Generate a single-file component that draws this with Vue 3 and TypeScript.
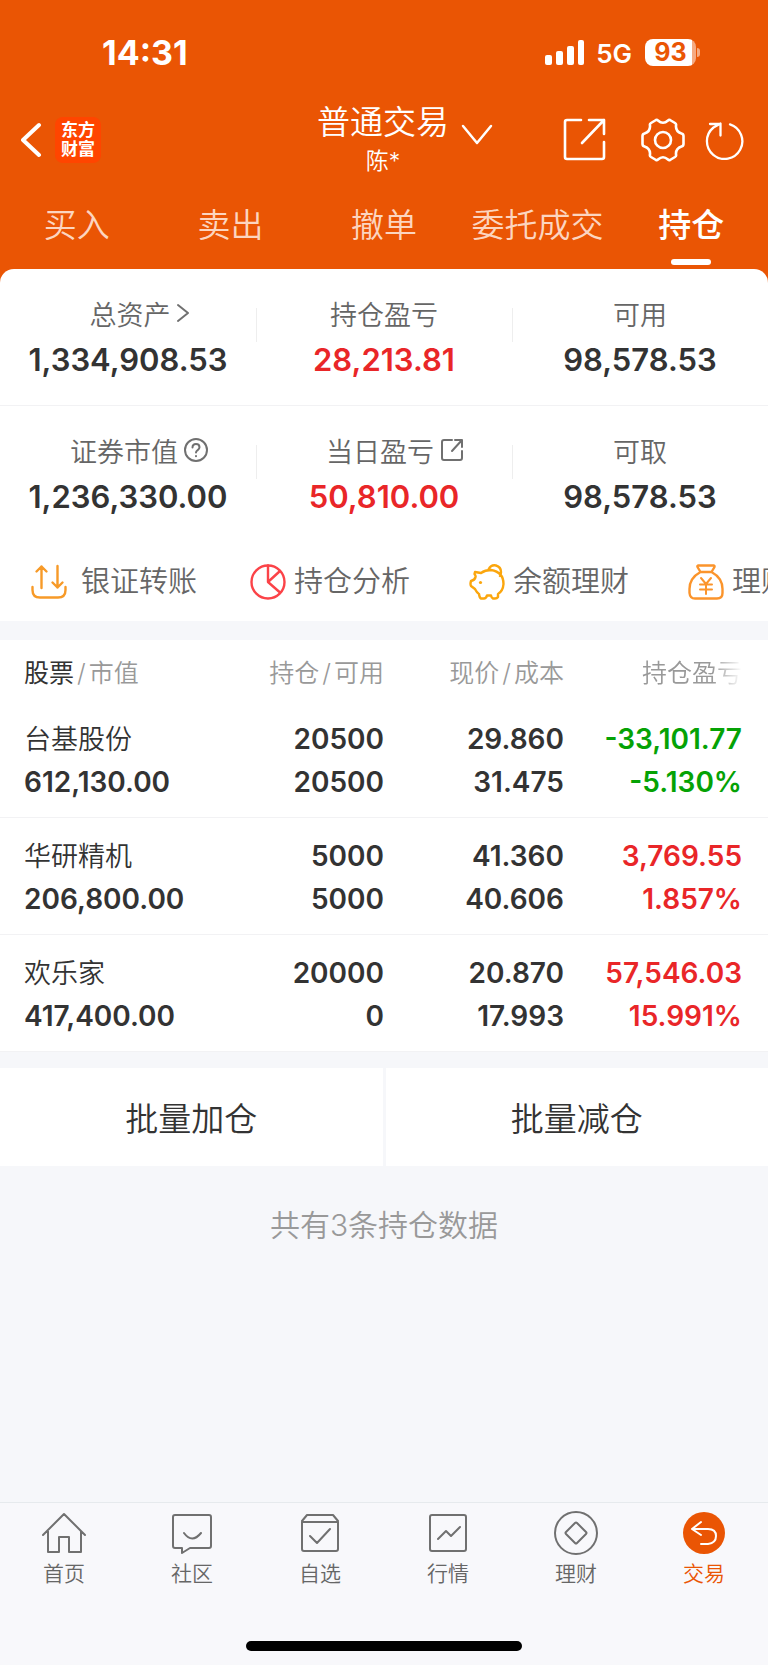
<script setup lang="ts">
import { ref } from 'vue'

type Tone = 'up' | 'down'
interface Holding {
  name: string
  value: string
  held: string
  available: string
  price: string
  cost: string
  profit: string
  rate: string
  tone: Tone
}
interface Metric {
  label: string
  value: string
  icon?: 'chevron' | 'help' | 'open'
  red?: boolean
}

const tabs = ['买入', '卖出', '撤单', '委托成交', '持仓']
const activeTab = ref('持仓')

const metrics: Metric[][] = [
  [
    { label: '总资产', value: '1,334,908.53', icon: 'chevron' },
    { label: '持仓盈亏', value: '28,213.81', red: true },
    { label: '可用', value: '98,578.53' },
  ],
  [
    { label: '证券市值', value: '1,236,330.00', icon: 'help' },
    { label: '当日盈亏', value: '50,810.00', icon: 'open', red: true },
    { label: '可取', value: '98,578.53' },
  ],
]

const shortcuts = [
  { id: 'transfer', label: '银证转账' },
  { id: 'analysis', label: '持仓分析' },
  { id: 'balance', label: '余额理财' },
  { id: 'wealth', label: '理财' },
]

const holdings: Holding[] = [
  { name: '台基股份', value: '612,130.00', held: '20500', available: '20500', price: '29.860', cost: '31.475', profit: '-33,101.77', rate: '-5.130%', tone: 'down' },
  { name: '华研精机', value: '206,800.00', held: '5000', available: '5000', price: '41.360', cost: '40.606', profit: '3,769.55', rate: '1.857%', tone: 'up' },
  { name: '欢乐家', value: '417,400.00', held: '20000', available: '0', price: '20.870', cost: '17.993', profit: '57,546.03', rate: '15.991%', tone: 'up' },
]

const navItems = [
  { id: 'home', label: '首页' },
  { id: 'community', label: '社区' },
  { id: 'watch', label: '自选' },
  { id: 'market', label: '行情' },
  { id: 'finance', label: '理财' },
  { id: 'trade', label: '交易' },
]
const activeNav = ref('trade')
</script>

<template>
  <div class="app">
    <header class="top">
      <div class="status">
        <span class="time">14:31</span>
        <div class="status-right">
          <svg class="signal" viewBox="0 0 40 25" width="40" height="25" aria-hidden="true">
            <rect x="0" y="15" width="7" height="10" rx="2" />
            <rect x="11" y="11" width="7" height="14" rx="2" />
            <rect x="22" y="6" width="7" height="19" rx="2" />
            <rect x="33" y="0" width="6" height="25" rx="2" />
          </svg>
          <span class="network">5G</span>
          <span class="battery"><span class="level">93</span><i class="cap"></i></span>
        </div>
      </div>

      <div class="bar">
        <div class="bar-left">
          <button class="icon-btn" aria-label="返回">
            <svg viewBox="0 0 22 36" width="22" height="36"><path d="M18 3 2 18 18 33" stroke-width="4" /></svg>
          </button>
          <span class="logo"><span>东方</span><span>财富</span></span>
        </div>
        <div class="title">
          <button class="account">
            <span>普通交易</span>
            <svg viewBox="0 0 32 22" width="32" height="22" aria-hidden="true"><path d="M2 2 16 19 30 2" stroke-width="2.5" /></svg>
          </button>
          <span class="owner">陈*</span>
        </div>
        <div class="bar-right">
          <button class="icon-btn" aria-label="分享">
            <svg viewBox="0 0 44 44" width="44" height="44">
              <path d="M18 2H4Q2 2 2 4V39Q2 41 4 41H39Q41 41 41 39V24M26 2H41V16M41 2 19 25" stroke-width="2.6" />
            </svg>
          </button>
          <button class="icon-btn gear" aria-label="设置">
            <svg viewBox="0 0 44 44" width="44" height="44">
              <path d="M15 2Q16 1.500 17 2.500Q22 7 27 2.500Q28 1.500 29 2L34 5Q35.500 6 35 7.500Q34.500 13.500 40.500 15.500Q42.500 16 42.500 18V26Q42.500 28 40.500 28.500Q34.500 30.500 35 36.500Q35.500 38 34 39L29 42Q28 42.500 27 41.500Q22 37 17 41.500Q16 42.500 15 42L10 39Q8.500 38 9 36.500Q9.500 30.500 3.500 28.500Q1.500 28 1.500 26V18Q1.500 16 3.500 15.500Q9.500 13.500 9 7.500Q8.500 6 10 5Z" stroke-width="2.6" />
              <circle cx="22" cy="22" r="8" stroke-width="2.6" />
            </svg>
          </button>
          <button class="icon-btn refresh" aria-label="刷新">
            <svg viewBox="0 0 40 40" width="40" height="40">
              <path d="M25 4.400A17.700 17.700 0 1 1 8.500 7.500L15.500 3.500M5 4H15.500V15.500" stroke-width="2.3" />
            </svg>
          </button>
        </div>
      </div>

      <nav class="tabs" aria-label="交易功能">
        <button v-for="tab in tabs" :key="tab" :class="{ on: tab === activeTab }" @click="activeTab = tab">{{ tab }}</button>
      </nav>
    </header>

    <section class="summary">
      <div v-for="(row, r) in metrics" :key="r" class="metric-row">
        <div v-for="m in row" :key="m.label" class="metric">
          <div class="metric-label" :class="{ 'with-icon': m.icon }">
            <span>{{ m.label }}</span>
            <svg v-if="m.icon === 'chevron'" viewBox="0 0 12 20" width="12" height="20" aria-hidden="true"><path d="M1 2 11 10 1 18" /></svg>
            <svg v-else-if="m.icon === 'help'" viewBox="0 0 24 24" width="24" height="24" aria-hidden="true">
              <circle cx="12" cy="12" r="11" />
              <path d="M8.500 9.500Q8.500 6 12 6T15.500 9.300Q15.500 11 13.500 12.300Q12 13.500 12 14.500M12 18V18.200" />
            </svg>
            <svg v-else-if="m.icon === 'open'" viewBox="0 0 24 24" width="24" height="24" aria-hidden="true">
              <path d="M12 2H4Q2 2 2 4V20Q2 22 4 22H20Q22 22 22 20V13M15 2H22V9M22 2 12 13" />
            </svg>
          </div>
          <div class="metric-value" :class="{ up: m.red }">{{ m.value }}</div>
        </div>
      </div>
    </section>

    <div class="shortcuts">
      <a v-for="s in shortcuts" :key="s.id" href="#" :class="s.id">
        <svg v-if="s.id === 'transfer'" viewBox="0 0 36 36" width="36" height="36" aria-hidden="true" stroke="#f79a28">
          <path d="M1.500 23V26Q1.500 33.500 9 33.500H27Q34.500 33.500 34.500 26V23M10.500 24V2.500M5.500 7.500 10.500 2.500 15.500 7.500M26.500 2V23.500M21.500 18.500 26.500 23.500 31.500 18.500" />
        </svg>
        <svg v-else-if="s.id === 'analysis'" viewBox="0 0 36 36" width="36" height="36" aria-hidden="true" stroke="#fb4348">
          <circle cx="18" cy="18" r="16.500" /><path d="M18 1.500V18L30 28.500M18 18 30 7" />
        </svg>
        <svg v-else-if="s.id === 'balance'" viewBox="0 0 36 36" width="36" height="36" aria-hidden="true" stroke="#fba60d">
          <path d="M6 8 12 9Q16 6 22 6Q34.500 8 34.500 20Q34 27 29 30V33Q28 34.500 26 34.500H24Q22.500 34 22 31.500H18Q17 34.500 15 34.500H12Q10.500 34 10 30Q8 29 6 25L2 22Q1 20 2 17Q6 16 6.500 13Q7 12 5.500 10ZM19.500 5.500Q22 .5 27 1.500Q32 3 32 8Q32 11 31 12" />
          <circle cx="11.500" cy="18.500" r="1.600" fill="#fba60d" stroke="none" />
        </svg>
        <svg v-else viewBox="0 0 36 36" width="36" height="36" aria-hidden="true" stroke="#fb942b">
          <path d="M10 1.500H26Q27 2 26.500 3L23.500 8H12.500L9.500 3Q9 2 10 1.500ZM12.500 8Q1.500 14 1.500 25V29Q2 34.500 7 34.500H29Q34.500 34.500 34.500 29V25Q34.500 14 23.500 8" />
          <path d="M13 14 18 20 23 14M12 20.500H24M12 25.500H24M18 20V30" stroke-width="2" />
        </svg>
        <span>{{ s.label }}</span>
      </a>
    </div>

    <table class="holdings">
      <thead>
        <tr>
          <th scope="col"><b>股票</b><i>/</i>市值</th>
          <th scope="col">持仓<i>/</i>可用</th>
          <th scope="col">现价<i>/</i>成本</th>
          <th scope="col"><span class="fade">持仓盈亏</span></th>
        </tr>
      </thead>
      <tbody>
        <tr v-for="h in holdings" :key="h.name">
          <td><div class="name">{{ h.name }}</div><div>{{ h.value }}</div></td>
          <td><div>{{ h.held }}</div><div>{{ h.available }}</div></td>
          <td><div>{{ h.price }}</div><div>{{ h.cost }}</div></td>
          <td :class="h.tone"><div>{{ h.profit }}</div><div>{{ h.rate }}</div></td>
        </tr>
      </tbody>
    </table>

    <div class="batch">
      <button>批量加仓</button>
      <button>批量减仓</button>
    </div>
    <p class="count">共有{{ holdings.length }}条持仓数据</p>

    <footer class="bottom">
      <nav class="bottom-nav" aria-label="主导航">
        <a v-for="n in navItems" :key="n.id" href="#" :class="{ on: n.id === activeNav }" @click.prevent="activeNav = n.id">
          <svg viewBox="0 0 44 44" width="44" height="44" aria-hidden="true">
            <path v-if="n.id === 'home'" d="M1 24 22 3 43 24M6 20V41H17V26H27V41H39V20" />
            <path v-else-if="n.id === 'community'" d="M5 4H39Q41 4 41 6V35Q41 37 39 37H20L12 42V37H5Q3 37 3 35V6Q3 4 5 4ZM14 22Q22 33 31 22" />
            <path v-else-if="n.id === 'watch'" d="M4 10 9 4H35L40 10M4 11H40V38Q40 40 38 40H6Q4 40 4 38ZM12 25 19 32 32 18" />
            <path v-else-if="n.id === 'market'" d="M6 4H38Q40 4 40 6V38Q40 40 38 40H6Q4 40 4 38V6Q4 4 6 4ZM12 28 20 20 25 25 34 16" />
            <g v-else-if="n.id === 'finance'"><circle cx="22" cy="22" r="21" /><path d="M21 12Q22 11 23 12L32 21Q33 22 32 23L23 32Q22 33 21 32L12 23Q11 22 12 21Z" /></g>
            <g v-else><circle cx="22" cy="22" r="21" fill="#ea5504" stroke="none" /><path stroke="#fff" d="M19 11 10 18 19 24M10 18H26Q34 18 34 25T26 33H19" /></g>
          </svg>
          <span>{{ n.label }}</span>
        </a>
      </nav>
      <div class="indicator"></div>
    </footer>
  </div>
</template>

<style>
body { margin: 0; background: #f6f7fa; }
</style>

<style scoped>
* { box-sizing: border-box; }
.app {
  display: flex;
  flex-direction: column;
  min-height: 100vh;
  overflow: hidden;
  background: #f6f7fa;
  color: #333;
  font-family: Inter, "Noto Sans CJK SC", sans-serif;
  font-weight: 350;
}
button { padding: 0; border: 0; background: none; color: inherit; font: inherit; cursor: pointer; }
a { color: inherit; text-decoration: none; }
i { font-style: normal; }
svg { display: block; flex: none; fill: none; stroke-linecap: round; stroke-linejoin: round; }

.top { padding-bottom: 32px; background: #ea5504; color: #fff; }
.top svg { stroke: #fff; }
.status { display: flex; justify-content: space-between; align-items: center; height: 102px; padding: 2px 68px 0 102px; }
.time { font-size: 34px; font-weight: 700; }
.status-right { display: flex; align-items: center; }
.top .signal { fill: #fff; stroke: none; }
.network { margin: 2px 13px 0 11px; font-size: 26px; font-weight: 600; }
.battery { display: flex; align-items: center; gap: 1px; }
.level {
  width: 51px; height: 27px; border-radius: 8px;
  background: linear-gradient(to right, #fff 92%, #f5aa82 92%);
  color: #ea5504; font-size: 25px; font-weight: 700; line-height: 27px; text-align: center;
}
.cap { width: 3px; height: 9px; border-radius: 0 4px 4px 0; background: #f5aa82; }

.bar { display: grid; grid-template-columns: 1fr auto 1fr; align-items: center; height: 72px; padding: 0 23px 0 21px; }
.bar-left { display: flex; align-items: center; gap: 12px; }
.logo {
  display: flex; flex-direction: column; justify-content: center; align-items: center;
  width: 46px; height: 46px; border-radius: 8px; background: #ff4500;
  font-size: 17px; font-weight: 700; line-height: 19px;
}
.title { display: flex; flex-direction: column; align-items: center; gap: 2px; }
.account { position: relative; font-size: 33px; line-height: 40px; }
.account svg { position: absolute; left: 100%; top: 22px; margin-left: 12px; }
.owner { font-size: 23px; line-height: 34px; }
.bar-right { display: flex; justify-content: flex-end; align-items: center; }
.gear { margin-left: 34px; }
.refresh { margin-left: 20px; }
.tabs { display: grid; grid-template-columns: repeat(5, 1fr); height: 79px; }
.tabs button { position: relative; padding-top: 23px; font-size: 33px; line-height: 56px; color: #fcd5c0; }
.tabs .on { color: #fff; font-weight: 500; }
.tabs .on::after {
  content: ""; position: absolute; left: 50%; bottom: -12px; width: 40px; height: 6px;
  margin-left: -20px; border-radius: 3px; background: #fff;
}

.up { color: #e92628; }
.down { color: #05a205; }

.summary { margin-top: -16px; border-radius: 14px 14px 0 0; background: #fff; }
.metric-row { display: grid; grid-template-columns: repeat(3, 1fr); padding: 22px 0; }
.metric-row:first-child { border-bottom: 1px solid #f2f2f4; }
.metric { position: relative; display: flex; flex-direction: column; align-items: center; gap: 2px; }
.metric + .metric::before {
  content: ""; position: absolute; left: 0; top: 17px; width: 1px; height: 34px; background: #eee;
}
.metric-label { display: flex; align-items: center; gap: 6px; height: 44px; color: #666; font-size: 27px; }
.with-icon { padding-left: 22px; }
.metric-label svg { stroke: #707070; stroke-width: 2; }
.metric-value { font-size: 31px; font-weight: 600; line-height: 46px; }

.shortcuts {
  display: grid; grid-auto-flow: column; grid-auto-columns: 219px;
  padding: 18px 0 17px 31px; overflow: hidden; background: #fff;
  color: #666; font-size: 29px; line-height: 44px;
}
.shortcuts a { display: flex; align-items: center; gap: 8px; white-space: nowrap; }
.shortcuts .transfer { gap: 14px; }
.shortcuts svg { stroke-width: 2.4; }

.holdings {
  width: 100%; margin-top: 19px; border-collapse: collapse; table-layout: fixed;
  background: #fff; text-align: right;
}
th, td { padding: 0; }
th:first-child, td:first-child { padding-left: 24px; text-align: left; }
th:nth-child(1) { width: 30%; }
th:nth-child(2) { width: 20%; }
th:nth-child(3) { width: 180px; }
th:last-child, td:last-child { padding-right: 26px; }
th { height: 61px; color: #999; font-size: 25px; font-weight: 350; }
th b { color: #333; font-weight: 400; }
th i { margin: 0 3px; }
.fade {
  display: inline-block;
  -webkit-mask-image: linear-gradient(to right, #000 70%, transparent);
  mask-image: linear-gradient(to right, #000 70%, transparent);
}
td { padding-top: 17px; padding-bottom: 13px; font-size: 28px; font-weight: 600; line-height: 43px; }
td div { height: 43px; }
.name { font-size: 27px; font-weight: 350; }
tbody tr { border-bottom: 1px solid #f2f2f4; }

.batch { display: grid; grid-template-columns: 1fr 1fr; gap: 3px; margin-top: 16px; }
.batch button { height: 98px; background: #fff; font-size: 33px; }
.count { margin: 0; padding: 37px 0; color: #999; font-size: 30px; line-height: 44px; text-align: center; }

.bottom { margin-top: auto; border-top: 1px solid #e6eaed; background: #f8f8fb; }
.bottom-nav { display: grid; grid-template-columns: repeat(6, 1fr); }
.bottom-nav a {
  display: flex; flex-direction: column; align-items: center; padding-top: 8px;
  color: #666; font-size: 21px; line-height: 38px;
}
.bottom-nav svg { stroke: #707070; stroke-width: 2; }
.bottom-nav .on { color: #ea5504; }
.indicator { width: 36%; height: 10px; margin: 48px auto 14px; border-radius: 5px; background: #000; }
</style>
